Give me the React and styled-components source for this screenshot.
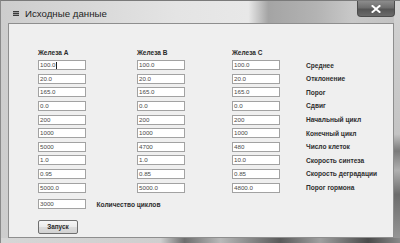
import React from "react";
import styled, { createGlobalStyle } from "styled-components";

const Global = createGlobalStyle`
  html, body {
    margin: 0;
    padding: 0;
    background: #cfcfcf;
  }
`;

const Frame = styled.div`
  width: 400px;
  height: 243px;
  box-sizing: border-box;
  display: flex;
  flex-direction: column;
  overflow: hidden;
  border-left: 1px solid #8a8a8a;
  border-top: 1px solid #7a7a7a;
  font-family: "Liberation Sans", Arial, sans-serif;
  background:
    linear-gradient(90deg, #d6d6d6 0%, #cfcfcf 40%, #6e6e6e 46%, #b9b9b9 55%, #5a5a5a 70%, #a0a0a0 80%, #4a4a4a 92%, #8a8a8a 100%) bottom / 100% 5px no-repeat,
    linear-gradient(180deg, #d2d2d2 0%, #c4c4c4 55%, #7a7a7a 62%, #b0b0b0 70%, #6c6c6c 80%, #9a9a9a 100%) right / 6px 100% no-repeat,
    linear-gradient(90deg, #cdcdcd 0%, #d8d8d8 22%, #e4e4e4 44%, #e8e8e8 62%, #a4a4a4 67%, #b3b3b3 79%, #c8c8c8 88%, #c2c2c2 100%);
`;

const TitleBar = styled.div`
  height: 22px;
  flex: none;
  display: flex;
  align-items: center;
  padding-left: 12px;
`;

const AppIcon = styled.div`
  width: 6px;
  height: 5px;
  margin-top: 2px;
  background: repeating-linear-gradient(180deg, #3a3a3a 0 1px, #9a9a9a 1px 2px);
`;

const Title = styled.span`
  margin-left: 6px;
  margin-top: 3px;
  font-size: 9.7px;
  color: #1e1e1e;
`;

const CloseButton = styled.div`
  margin-left: auto;
  margin-right: 5px;
  align-self: flex-start;
  width: 38px;
  height: 16px;
  box-sizing: border-box;
  display: flex;
  align-items: center;
  justify-content: center;
  border: 1px solid #4c4c4c;
  border-top: none;
  border-radius: 0 0 4px 4px;
  background: linear-gradient(180deg, #8c8c8c 0%, #6e6e6e 45%, #555 55%, #6a6a6a 100%);
`;

const Client = styled.div`
  flex: 1;
  margin: 0 6px 5px 7px;
  border: 1px solid #8e8e8e;
  background: #efefef;
  padding: 25px 0 0 29px;
`;

const Grid = styled.div`
  display: grid;
  grid-template-columns: 99px 95px 74px 1fr;
  grid-auto-rows: 10px;
  row-gap: 3.6px;
  grid-template-rows: 7.6px;
`;

const Header = styled.div`
  font-size: 6.5px;
  font-weight: bold;
  color: #2a2a2a;
  line-height: 7.6px;
`;

const Field = styled.div`
  width: ${(p) => p.$w || 48}px;
  height: 10px;
  box-sizing: border-box;
  border: 1px solid #a2a2a2;
  background: #fff;
  font-size: 6.2px;
  line-height: 8px;
  padding-left: 1px;
  color: #4a4a4a;
  display: flex;
  align-items: center;
`;

const Caret = styled.span`
  display: inline-block;
  width: 1px;
  height: 7px;
  background: #222;
  margin-left: 0.5px;
`;

const Label = styled.div`
  font-size: 6.6px;
  font-weight: bold;
  color: #2e2e2e;
  display: flex;
  align-items: center;
`;

const CountRow = styled.div`
  display: flex;
  align-items: center;
  gap: 10.5px;
  margin-top: 6.8px;
`;

const StartButton = styled.div`
  width: 40px;
  height: 14px;
  box-sizing: border-box;
  margin-top: 10.5px;
  border: 1px solid #6f6f6f;
  border-radius: 2px;
  background: linear-gradient(180deg, #f6f6f6 0%, #ebebeb 48%, #dcdcdc 52%, #d2d2d2 100%);
  display: flex;
  align-items: center;
  justify-content: center;
  font-size: 6.4px;
  font-weight: bold;
  color: #2a2a2a;
`;

const rows = [
  ["100.0", "100.0", "100.0", "Среднее"],
  ["20.0", "20.0", "20.0", "Отклонение"],
  ["165.0", "165.0", "165.0", "Порог"],
  ["0.0", "0.0", "0.0", "Сдвиг"],
  ["200", "200", "200", "Начальный цикл"],
  ["1000", "1000", "1000", "Конечный цикл"],
  ["5000", "4700", "480", "Число клеток"],
  ["1.0", "1.0", "10.0", "Скорость синтеза"],
  ["0.95", "0.85", "0.85", "Скорость деградации"],
  ["5000.0", "5000.0", "4800.0", "Порог гормона"],
];

function App() {
  return (
    <>
      <Global />
      <Frame>
        <TitleBar>
          <AppIcon />
          <Title>Исходные данные</Title>
          <CloseButton>
            <svg width="10" height="8" viewBox="0 0 10 8">
              <path d="M1.5 1 L8.5 7 M8.5 1 L1.5 7" stroke="#fff" strokeWidth="2" strokeLinecap="square" />
            </svg>
          </CloseButton>
        </TitleBar>
        <Client>
          <Grid>
            <Header>Железа A</Header>
            <Header>Железа B</Header>
            <Header>Железа C</Header>
            <div />
            {rows.map((r, i) => (
              <React.Fragment key={i}>
                <Field>
                  {r[0]}
                  {i === 0 && <Caret />}
                </Field>
                <Field>{r[1]}</Field>
                <Field>{r[2]}</Field>
                <Label>{r[3]}</Label>
              </React.Fragment>
            ))}
          </Grid>
          <CountRow>
            <Field>3000</Field>
            <Label>Количество циклов</Label>
          </CountRow>
          <StartButton>Запуск</StartButton>
        </Client>
      </Frame>
    </>
  );
}

export default App;
